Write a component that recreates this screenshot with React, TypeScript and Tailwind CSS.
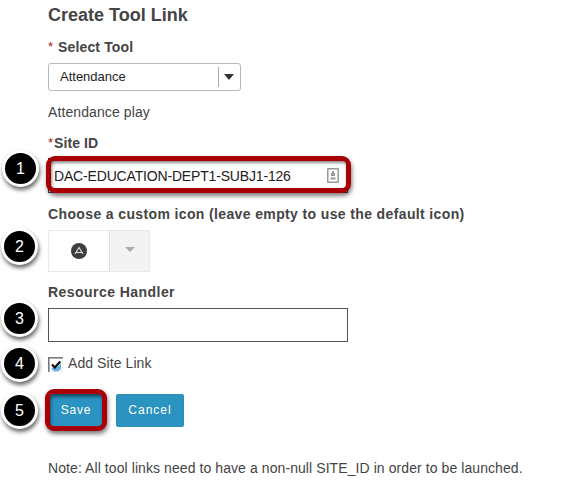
import React from "react";

function Step({ n, className }: { n: number; className: string }) {
  return (
    <span
      className={`absolute flex h-[37px] w-[37px] items-center justify-center rounded-full border-[3px] border-white bg-black text-[16px] leading-none text-white shadow-[1px_3px_4px_rgba(0,0,0,0.6)] ${className}`}
    >
      {n}
    </span>
  );
}

const label = "flex h-5 items-center whitespace-pre text-[14px] font-bold";

export default function App() {
  return (
    <main className="flex h-[502px] w-[568px] flex-col bg-white pt-[5px] pl-12 font-['Liberation_Sans',Arial,sans-serif] text-[14px] leading-5 text-[#444]">
      <h1 className="h-5 text-[18px] leading-5 font-bold">Create Tool Link</h1>

      <div className={`mt-3 ${label}`}>
        <span className="w-[5px] text-[13px] font-normal text-[#a22020]">*</span>
        <span className="ml-[5px] tracking-[0.15px]">Select Tool</span>
      </div>
      <div className="mt-1.5 flex h-7 w-[193px] items-center rounded-[3px] border border-[#b8b8b8] pl-[11px] text-[13px] text-[#222]">
        <span className="flex-1">Attendance</span>
        <span className="flex h-5 w-[22px] items-center justify-center border-l border-[#aaa] pr-px">
          <svg width="10" height="6" viewBox="0 0 10 6">
            <path d="M0 0h10L5 6z" fill="#333" />
          </svg>
        </span>
      </div>

      <p className="mt-[11px] h-5 tracking-[0.1px]">Attendance play</p>

      <label className={`mt-[11px] ${label}`}>
        <span className="w-1.5 text-[13px] font-normal text-[#a22020]">*</span>
        <span className="tracking-[0.1px]">Site ID</span>
      </label>
      <div className="relative mt-[5px] h-[35px] w-[300px] border border-[#444]">
        <Step n={1} className="top-[-9px] left-[-47px]" />
        <div className="absolute top-[-3px] left-[-3px] flex h-[37px] w-[305px] items-center justify-between rounded-[9px] border-[5px] border-[#a90006] bg-white pt-0.5 pr-[7px] pl-[3px] text-[#222] shadow-[1px_3px_4px_rgba(0,0,0,0.5),inset_1px_2px_3px_rgba(0,0,0,0.45)]">
          <span className="tracking-[-0.17px]">DAC-EDUCATION-DEPT1-SUBJ1-126</span>
          <svg width="12" height="15" viewBox="0 0 12 15">
            <rect x="0.75" y="0.75" width="10.5" height="13.5" rx="0.5" fill="#fff" stroke="#999" strokeWidth="1.5" />
            <path d="M5 3h2v2h1v3H4V5h1zM3.5 9.5h5v2h-5z" fill="#999" />
          </svg>
        </div>
      </div>

      <div className={`mt-[11px] tracking-[0.37px] ${label}`}>Choose a custom icon (leave empty to use the default icon)</div>
      <div className="relative mt-1.5 flex h-[42px] w-[102px] border border-[#e8e8e8]">
        <Step n={2} className="top-[-3px] left-[-48px]" />
        <span className="flex w-[61px] items-center justify-center border-r border-[#ddd]">
          <svg width="16" height="16" viewBox="0 0 16 16">
            <circle cx="8" cy="8" r="8" fill="#3d3d42" />
            <path d="M4 11 8 4.5l4 6.5M5.5 9.5h5" fill="none" stroke="#e4e4e4" strokeWidth="1.1" />
          </svg>
        </span>
        <span className="flex flex-1 items-start justify-center bg-[#f3f3f3] pt-4">
          <svg width="10" height="5" viewBox="0 0 10 5">
            <path d="M0 0h10L5 5z" fill="#aaa" />
          </svg>
        </span>
      </div>

      <label className={`mt-2.5 tracking-[0.45px] ${label}`}>Resource Handler</label>
      <div className="relative mt-1.5 h-[34px] w-[300px] border border-[#555]">
        <Step n={3} className="top-[-9px] left-[-48px]" />
      </div>

      <div className="relative mt-[11px] flex h-5 items-center">
        <Step n={4} className="top-[-8px] left-[-47px]" />
        <svg width="16" height="16" viewBox="0 0 16 16" className="mt-[3px]">
          <path d="M0 0h15v15H0z" fill="#eee" />
          <path d="M2 2h12v12H2z" fill="#fff" />
          <path d="M3 11c5 1 8-2 10-5v6q-2 2.5-5 2.5T3 11z" fill="#62b4ed" />
          <path d="M0 15V0h15v1.5H1.5V15z" fill="#777" />
          <path d="m4 7.5 2.8 3 5.5-6" fill="none" stroke="#111" strokeWidth="2.3" />
        </svg>
        <span className="ml-1 tracking-[0.08px]">Add Site Link</span>
      </div>

      <div className="relative mt-[16px] -ml-[3px] flex h-[42px] items-center">
        <Step n={5} className="top-[3px] left-[-44px]" />
        <button className="h-[42px] w-[62px] rounded-[9px] border-[5px] border-[#a90006] bg-[#2a93c1] text-[12px] tracking-[0.8px] text-white shadow-[1px_3px_4px_rgba(0,0,0,0.5),inset_1px_3px_3px_rgba(0,0,0,0.45)]">
          Save
        </button>
        <button className="ml-[9px] h-[33px] w-[68px] rounded-[2px] border border-[#2b8dba] bg-[#2a93c1] text-[12px] tracking-[1px] text-white">
          Cancel
        </button>
      </div>

      <p className="mt-[27px] tracking-[0.08px]">Note: All tool links need to have a non-null SITE_ID in order to be launched.</p>
    </main>
  );
}
